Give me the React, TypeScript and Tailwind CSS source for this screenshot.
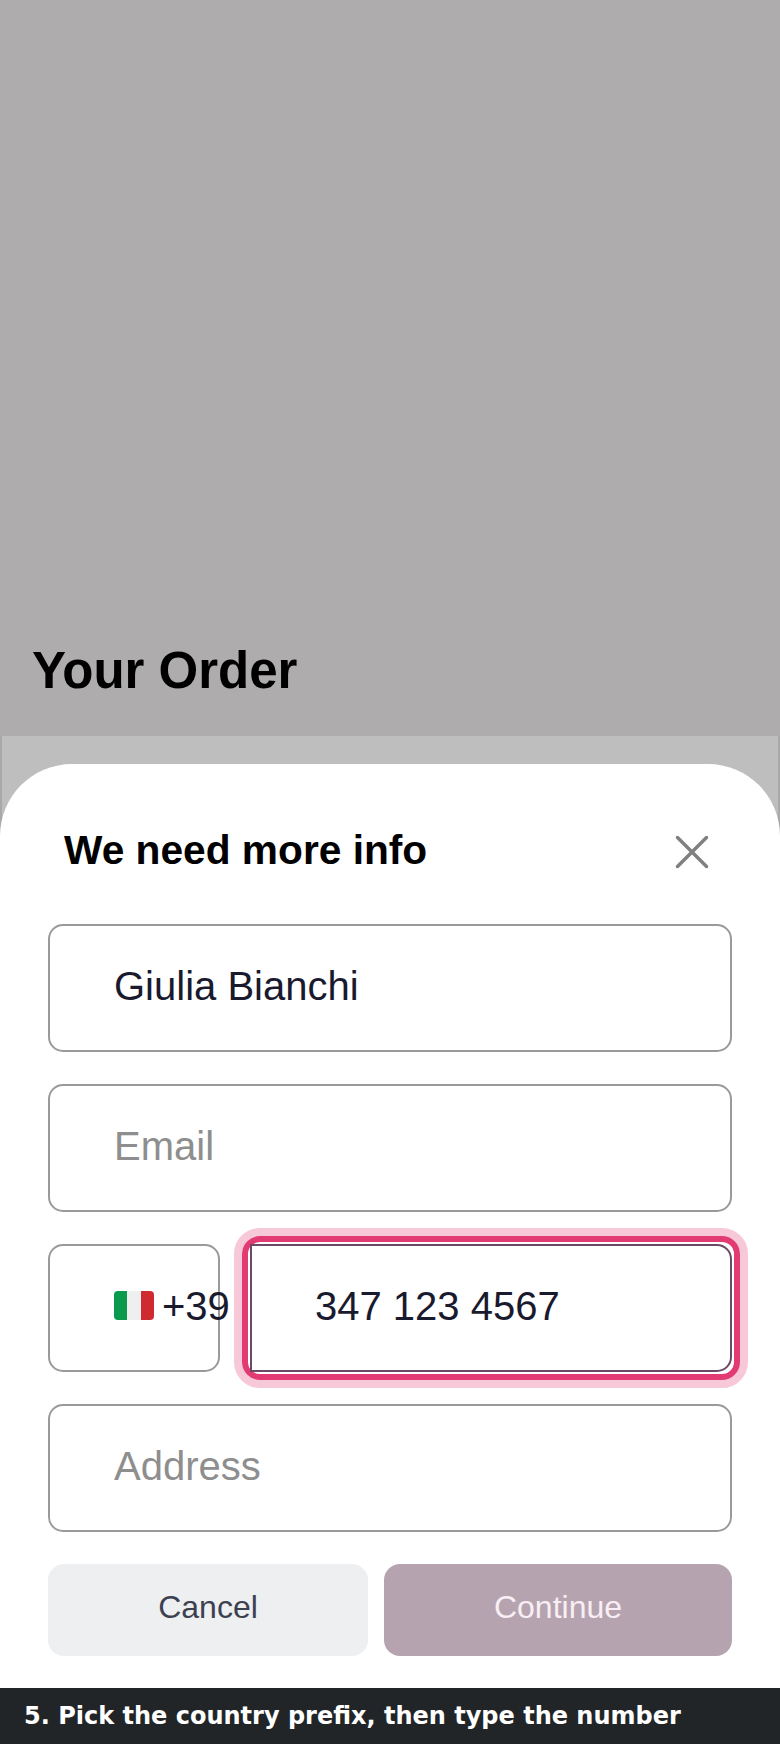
const sans = "font-['Liberation_Sans',Arial,sans-serif]";

function Field({ children, className = "" }: { children: React.ReactNode; className?: string }) {
  return (
    <div className={`flex h-[128px] items-center rounded-[15px] border-2 border-[#9a9a9a] bg-white pb-[4px] ${className}`}>
      {children}
    </div>
  );
}

export default function App() {
  return (
    <div className={`flex h-[1744px] w-[780px] flex-col overflow-hidden bg-[#aeacad] ${sans}`}>
      <div className="flex h-[736px] shrink-0 flex-col justify-end pb-[34px] pl-[32px]">
        <h1 className="text-[51px] font-bold leading-[62px] text-black">Your Order</h1>
      </div>
      <div className="flex flex-1 flex-col border-x-2 border-[#a9a9a9] bg-[#bebebe] pt-[28px]">
        <div className="mx-[-2px] flex flex-1 flex-col rounded-t-[72px] bg-white">
          <div className="flex h-[160px] shrink-0 items-start justify-between pl-[64px] pr-[70px] pt-[60px]">
            <h2 className="text-[40.7px] font-bold leading-[52px] text-black">We need more info</h2>
            <svg width="36" height="36" viewBox="0 0 36 36" className="mt-[10px]" fill="none" stroke="#808080" strokeWidth="3.5" strokeLinecap="round">
              <path d="M3.5 3.5 L32.5 32.5 M32.5 3.5 L3.5 32.5" />
            </svg>
          </div>
          <div className="flex flex-col gap-[32px] px-[48px]">
            <Field className="pl-[64px]"><span className="text-[40px] text-[#1a1a2e]">Giulia Bianchi</span></Field>
            <Field className="pl-[64px]"><span className="text-[40px] text-[#8e8e8e]">Email</span></Field>
            <div className="flex h-[128px]">
              <Field className="w-[172px] shrink-0 pl-[64px]">
                <div className="flex items-center gap-[8px] whitespace-nowrap">
                  <div className="mb-[2px] flex h-[29px] w-[40px] shrink-0 overflow-hidden rounded-[4px]">
                    <div className="flex-1 bg-[#0a9a4d]" />
                    <div className="flex-1 bg-[#eef0f0]" />
                    <div className="flex-1 bg-[#cf2a30]" />
                  </div>
                  <span className="text-[40px] text-[#1a1a2e]">+39</span>
                </div>
              </Field>
              <div className="my-[-16px] ml-[14px] mr-[-16px] flex-1 rounded-[26px] border-[8px] border-[#f6c8d8]">
                <div className="h-full rounded-[18px] border-[6px] border-[#e23a72] bg-white p-[2px]">
                  <div className="flex h-full items-center rounded-r-[15px] border-2 border-[#6b4a68] bg-white pb-[4px] pl-[63px]">
                    <span className="text-[40px] text-[#1a1a2e]">347 123 4567</span>
                  </div>
                </div>
              </div>
            </div>
            <Field className="pl-[64px]"><span className="text-[40px] text-[#8e8e8e]">Address</span></Field>
          </div>
          <div className="mt-[32px] flex gap-[16px] px-[48px]">
            <button className="h-[92px] w-[320px] rounded-[16px] bg-[#eeeff0] pb-[6px] text-[32px] text-[#3b4150]">Cancel</button>
            <button className="h-[92px] flex-1 rounded-[16px] bg-[#b5a4af] pb-[6px] text-[32px] text-[#f8eef4]">Continue</button>
          </div>
        </div>
      </div>
      <div className="flex h-[56px] shrink-0 items-center bg-[#212528] pl-[24px] font-['DejaVu_Sans',sans-serif] text-[24px] font-bold text-white">
        5. Pick the country prefix, then type the number
      </div>
    </div>
  );
}
